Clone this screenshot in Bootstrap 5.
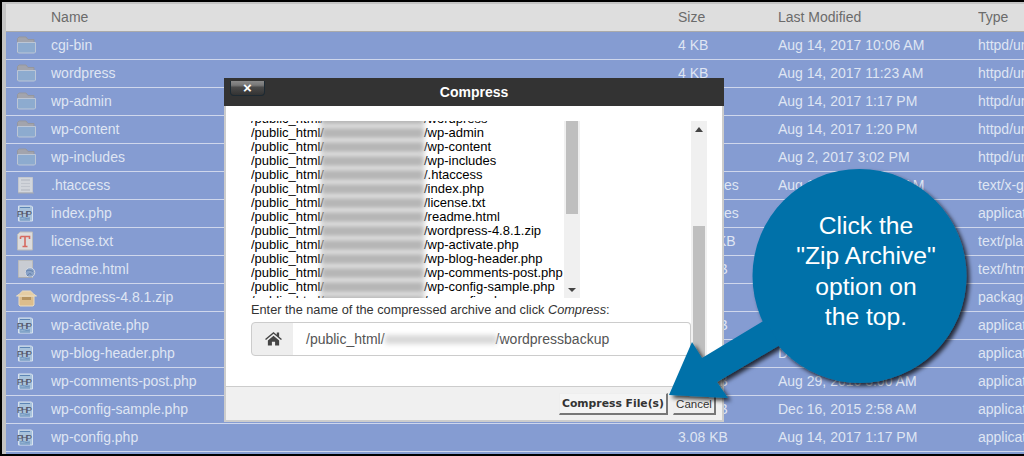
<!DOCTYPE html>
<html lang="en">
<head>
<meta charset="utf-8">
<title>Compress</title>
<link rel="stylesheet" href="https://cdn.jsdelivr.net/npm/bootstrap@5.3.0/dist/css/bootstrap.min.css">
<style>
html,body{margin:0;height:456px;overflow:hidden;background:#000}
body{font-family:"Liberation Sans",Arial,sans-serif}
.shot{position:relative;width:1024px;height:454px;border-top:2px solid #000;border-left:2px solid #000;background:#c4c4c4;padding:2px 0 0 4px;overflow:hidden}
.files{table-layout:fixed;width:1180px;margin:0;border-collapse:collapse;font-size:14px}
.files th,.files td{padding:0;height:28px;vertical-align:middle;white-space:nowrap;overflow:hidden;border:0;border-bottom:1px solid #cfd7ec;background:#859cd2;color:#dfe5f3;font-weight:400;box-shadow:none}
.files th{background:#dedede;color:#6b6b6b;border-bottom:1px solid #aaa;height:27px}
.files-tail{height:3px;background:#859cd2}
.c0{width:45px}.c1{width:627px}.c2{width:100px}.c3{width:200px}.c4{width:208px}
.ficon{display:block;margin-left:9px;width:22px;height:20px}
.dlg{position:absolute;left:222px;top:76px;width:500px;height:344px;border:0;border-radius:0;background:#fff;display:flex;flex-direction:column}
.dlg-head{height:28px;background:#333;color:#fff;font-weight:700;font-size:14px;position:relative;flex:none}
.dlg-title{display:block;text-align:center;line-height:28px}
.xbtn{position:absolute;left:6px;top:3px;width:35px;height:15px;padding:0;border:1px solid #1d2a33;border-top:0;border-radius:0 0 4px 4px;background:linear-gradient(#8a8a8a 0,#777 30%,#4a4a4a 45%,#333 100%);color:#fff;font-size:15px;font-weight:700;line-height:12px}
.dlg-body{flex:1;position:relative;border-left:2px solid #ccc;border-right:2px solid #ccc;min-height:0}
.paths{position:absolute;left:25px;top:15px;width:314px;height:177px;overflow:hidden;font-size:13px;line-height:14px;color:#000;white-space:nowrap}
.paths-inner{margin-top:-9px}
.smudge{display:inline-block;width:103px;height:12px;background:#b5b5b5;filter:blur(2.5px);vertical-align:-2px;margin-left:-3px}
.vbar{position:absolute;top:15px;width:16px;background:#f0f0f0}
.vbar-a{left:338px;height:177px}
.vbar-b{left:465px;height:265px}
.thumb{position:absolute;left:2px;width:12px;background:#bfbfbf}
.thumb-a{top:0;height:93px}
.thumb-b{top:105px;height:160px}
.tri-up,.tri-dn{position:absolute;left:4px;width:0;height:0;border-left:4px solid transparent;border-right:4px solid transparent}
.tri-up{top:6px;border-bottom:5px solid #444}
.tri-dn{bottom:6px;border-top:4px solid #444}
.prompt{position:absolute;left:25px;top:197px;font-size:12.75px;line-height:14px;color:#333;margin:0}
.pathgrp{position:absolute;left:25px;top:216px;width:440px;height:34px;font-size:14px}
.pathgrp .input-group-text{width:43px;justify-content:center;padding:0 0 2px 2px;background:#eee;border-color:#ccc;border-radius:4px 0 0 4px}
.pathbox{flex:1;display:flex;align-items:center;padding-left:13px;border:1px solid #ccc;border-left:0;border-radius:0 4px 4px 0;color:#555;background:#fff;white-space:nowrap}
.smudge2{display:inline-block;width:112px;height:9px;background:#d8d8d8;filter:blur(2.5px);margin-right:-1px}
.dlg-foot{height:36px;flex:none;background:#f0f0f0;border:2px solid #ccc;border-top:1px solid #ccc;display:flex;justify-content:flex-end;align-items:flex-start;padding:6px 6px 0 0;gap:5px}
.oldbtn{padding:0;height:22px;border:1px solid;border-color:#eee #777 #777 #eee;border-width:1px 2px 2px 1px;border-radius:0;background:#efefef;color:#222;font-family:"DejaVu Sans",sans-serif;font-size:10.8px;line-height:20px}
.oldbtn-a{width:109px;font-weight:700;background:#f4f4f4;color:#333}
.oldbtn-b{width:43px;font-family:"Liberation Sans",sans-serif;font-size:11.5px;color:#333}
.pointer{position:absolute;left:-2px;top:-2px;width:1024px;height:456px;pointer-events:none}
.callout{position:absolute;left:751px;top:167px;width:214px;height:214px;display:flex;align-items:center;justify-content:center;text-align:center;color:#fff;font-size:24.7px;line-height:30.5px;padding:0 0 9px 12px;white-space:nowrap}
</style>
</head>
<body>
<svg width="0" height="0" class="position-absolute">
<defs>
<symbol id="i-folder" viewBox="0 0 22 20">
<path d="M2.500 17.500V3.500L4 2h7l2 2.500h6v3H3z" fill="#a2a4ad" stroke="#95979f" stroke-width="1"/>
<path d="M2.500 7.500h18v9.500l-1 1h-16l-1-1z" fill="#8dabcf" stroke="#bcc6d6" stroke-width="1"/>
</symbol>
<symbol id="i-plain" viewBox="0 0 22 20">
<path d="M3.500 2.500h14v15h-14z" fill="#d2d6dc" stroke="#c3c7cf"/>
<path d="M6 4h9v12H6z" fill="#c0c4cc"/>
<path d="M6 7h9M6 10h9M6 13h9" stroke="#e2e4e8"/>
<path d="M3 18h16" stroke="#a8aab0"/>
</symbol>
<symbol id="i-php" viewBox="0 0 22 20">
<path d="M3.500 3h13l1 1v14h-14z" fill="#a8c3dc" stroke="#d7e2ee"/>
<path d="M5 4.500h10M5 17h10M5 15c3-1 6 1 10 0" stroke="#5c85b5" fill="none"/>
<text x="2" y="13.500" font-family="'Liberation Sans',sans-serif" font-size="9" fill="#4d4f5f" textLength="15">PHP</text>
</symbol>
<symbol id="i-txt" viewBox="0 0 22 20">
<path d="M2.500 3.500 5 1h12.500v18h-15z" fill="#dcdcdc" stroke="#bbb"/>
<path d="M5.500 5.500h9v2.500M5.500 5.500v2.500M10 5.500v10M7.500 15.500h5" stroke="#d66a60" stroke-width="1.600" fill="none"/>
</symbol>
<symbol id="i-html" viewBox="0 0 22 20">
<path d="M3.500 1.500h14v17h-14z" fill="#c9ccd3" stroke="#bbb"/>
<circle cx="15" cy="13.500" r="4.800" fill="#8aa3c8" stroke="#d5d9e2"/>
<path d="M11 12.500c2-2 5-1 7 0M12.500 17c1-3 3-3 4-1" stroke="#5f7da8" fill="none"/>
<path d="M3 18.500h14" stroke="#a8aab0"/>
</symbol>
<symbol id="i-zip" viewBox="0 0 22 20">
<path d="M4 9h15v9l-1 1H5l-1-1z" fill="#dcbd8c" stroke="#eadcc0"/>
<path d="M1.500 9c2-1 4-3 6-5h8c2 2 4 4 6 5z" fill="#e5cda3" stroke="#eadcc0"/>
<path d="M7 10h9v3H7z" fill="#b5935f"/>
</symbol>
</defs>
</svg>
<div class="shot">
<table class="table files">
<colgroup><col class="c0"><col class="c1"><col class="c2"><col class="c3"><col class="c4"></colgroup>
<thead><tr><th></th><th>Name</th><th>Size</th><th>Last Modified</th><th>Type</th></tr></thead>
<tbody>
<tr><td><svg class="ficon"><use href="#i-folder"/></svg></td><td>cgi-bin</td><td>4 KB</td><td>Aug 14, 2017 10:06 AM</td><td>httpd/unix-directory</td></tr>
<tr><td><svg class="ficon"><use href="#i-folder"/></svg></td><td>wordpress</td><td>4 KB</td><td>Aug 14, 2017 11:23 AM</td><td>httpd/unix-directory</td></tr>
<tr><td><svg class="ficon"><use href="#i-folder"/></svg></td><td>wp-admin</td><td>4 KB</td><td>Aug 14, 2017 1:17 PM</td><td>httpd/unix-directory</td></tr>
<tr><td><svg class="ficon"><use href="#i-folder"/></svg></td><td>wp-content</td><td>4 KB</td><td>Aug 14, 2017 1:20 PM</td><td>httpd/unix-directory</td></tr>
<tr><td><svg class="ficon"><use href="#i-folder"/></svg></td><td>wp-includes</td><td>12 KB</td><td>Aug 2, 2017 3:02 PM</td><td>httpd/unix-directory</td></tr>
<tr><td><svg class="ficon"><use href="#i-plain"/></svg></td><td>.htaccess</td><td>522 bytes</td><td>Aug 14, 2017 10:06 AM</td><td>text/x-generic</td></tr>
<tr><td><svg class="ficon"><use href="#i-php"/></svg></td><td>index.php</td><td>418 bytes</td><td>Sep 25, 2013 12:18 AM</td><td>application/x-httpd-php</td></tr>
<tr><td><svg class="ficon"><use href="#i-txt"/></svg></td><td>license.txt</td><td>19.94 KB</td><td>Jan 3, 2017 1:42 PM</td><td>text/plain</td></tr>
<tr><td><svg class="ficon"><use href="#i-html"/></svg></td><td>readme.html</td><td>7.41 KB</td><td>Aug 2, 2017 3:02 PM</td><td>text/html</td></tr>
<tr><td><svg class="ficon"><use href="#i-zip"/></svg></td><td>wordpress-4.8.1.zip</td><td>8.9 MB</td><td>Aug 14, 2017 1:15 PM</td><td>package/x-generic</td></tr>
<tr><td><svg class="ficon"><use href="#i-php"/></svg></td><td>wp-activate.php</td><td>5.45 KB</td><td>Aug 2, 2017 3:02 PM</td><td>application/x-httpd-php</td></tr>
<tr><td><svg class="ficon"><use href="#i-php"/></svg></td><td>wp-blog-header.php</td><td>364 bytes</td><td>Dec 19, 2015 6:20 AM</td><td>application/x-httpd-php</td></tr>
<tr><td><svg class="ficon"><use href="#i-php"/></svg></td><td>wp-comments-post.php</td><td>1.58 KB</td><td>Aug 29, 2016 3:00 AM</td><td>application/x-httpd-php</td></tr>
<tr><td><svg class="ficon"><use href="#i-php"/></svg></td><td>wp-config-sample.php</td><td>2.79 KB</td><td>Dec 16, 2015 2:58 AM</td><td>application/x-httpd-php</td></tr>
<tr><td><svg class="ficon"><use href="#i-php"/></svg></td><td>wp-config.php</td><td>3.08 KB</td><td>Aug 14, 2017 1:17 PM</td><td>application/x-httpd-php</td></tr>
</tbody>
</table>
<div class="files-tail"></div>

<div class="dlg">
<div class="dlg-head">
<button type="button" class="xbtn" aria-label="Close">×</button>
<span class="dlg-title">Compress</span>
</div>
<div class="dlg-body">
<div class="paths"><div class="paths-inner">
<div>/public_html/<span class="smudge"></span>/wordpress</div>
<div>/public_html/<span class="smudge"></span>/wp-admin</div>
<div>/public_html/<span class="smudge"></span>/wp-content</div>
<div>/public_html/<span class="smudge"></span>/wp-includes</div>
<div>/public_html/<span class="smudge"></span>/.htaccess</div>
<div>/public_html/<span class="smudge"></span>/index.php</div>
<div>/public_html/<span class="smudge"></span>/license.txt</div>
<div>/public_html/<span class="smudge"></span>/readme.html</div>
<div>/public_html/<span class="smudge"></span>/wordpress-4.8.1.zip</div>
<div>/public_html/<span class="smudge"></span>/wp-activate.php</div>
<div>/public_html/<span class="smudge"></span>/wp-blog-header.php</div>
<div>/public_html/<span class="smudge"></span>/wp-comments-post.php</div>
<div>/public_html/<span class="smudge"></span>/wp-config-sample.php</div>
<div>/public_html/<span class="smudge"></span>/wp-config.php</div>
</div></div>
<div class="vbar vbar-a"><div class="thumb thumb-a"></div><div class="tri-dn"></div></div>
<div class="vbar vbar-b"><div class="tri-up"></div><div class="thumb thumb-b"></div></div>
<p class="prompt">Enter the name of the compressed archive and click <em>Compress</em>:</p>
<div class="input-group pathgrp">
<span class="input-group-text"><svg width="17" height="15" viewBox="0 0 18 16"><path d="M9 1 0 8.500l1 1.200L9 3l8 6.700 1-1.200-3-2.500V1.500h-2.500v2.400z" fill="#444"/><path d="M3 10.200 9 5l6 5.200V15.500h-4.300v-4H7.300v4H3z" fill="#444"/></svg></span>
<div class="pathbox">/public_html/<span class="smudge2"></span>/wordpressbackup</div>
</div>
</div>
<div class="dlg-foot">
<button type="button" class="oldbtn oldbtn-a">Compress File(s)</button>
<button type="button" class="oldbtn oldbtn-b">Cancel</button>
</div>
</div>

<svg class="pointer" viewBox="0 0 1024 456">
<defs><filter id="sh" x="-20%" y="-20%" width="140%" height="140%"><feDropShadow dx="3" dy="3" stdDeviation="2" flood-color="#000" flood-opacity=".75"/></filter></defs>
<g filter="url(#sh)" fill="#0071a9">
<circle cx="859.500" cy="276" r="107"/>
<path d="M669 395 692 342 702 358 765 320 780 345 717 382 728 398z"/>
</g>
</svg>
<div class="callout"><div>Click the<br>"Zip Archive"<br>option on<br>the top.</div></div>
</div>
</body>
</html>
